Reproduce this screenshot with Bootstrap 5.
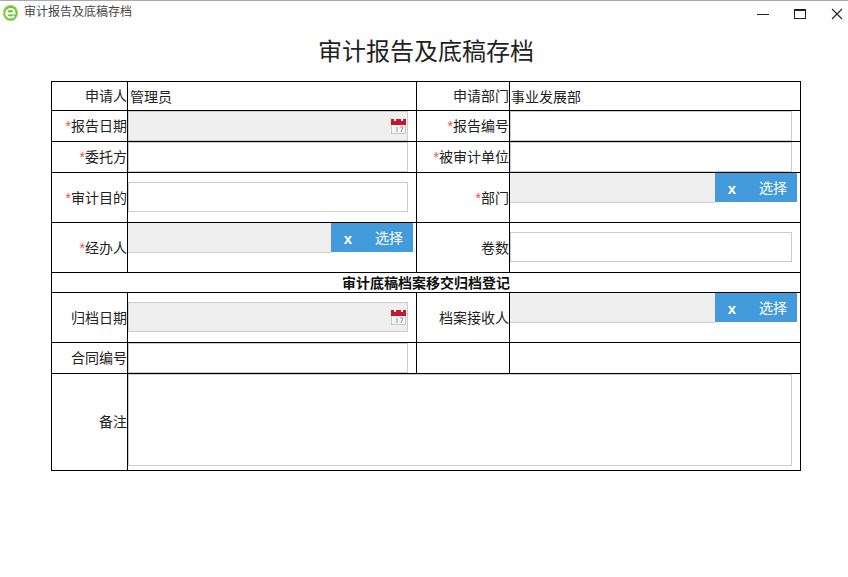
<!DOCTYPE html>
<html lang="zh">
<head>
<meta charset="utf-8">
<title>审计报告及底稿存档</title>
<link rel="stylesheet" href="https://cdn.jsdelivr.net/npm/bootstrap@5.3.0/dist/css/bootstrap.min.css">
<style>
html,body{height:100%;}
body{background:#fff;color:#222;font-family:"Liberation Sans","Noto Sans CJK SC",sans-serif;font-size:14px;border-top:1px solid #aaa;overflow:hidden;}
.win-bar{height:24px;padding-left:2px;padding-right:1px;}
.win-title{font-size:12px;line-height:14px;color:#444;margin-left:5px;margin-top:-3px;}
.win-ctrls{gap:17px;margin-top:2px;}
.win-ctrl{width:20px;height:24px;}
.doc-title{font-size:24px;font-weight:400;line-height:32px;margin:11px 0 0;text-align:center;width:852px;color:#222;}
.sheet-wrap{padding:13px 0 0 51px;}
.sheet{table-layout:fixed;border-collapse:collapse;width:749px;}
.sheet td{border:1px solid #000;padding:0;line-height:16px;}
.c1{width:76px}.c2{width:289px}.c3{width:93px}.c4{width:291px}
.h29{height:29px}.h31{height:31px}.h50{height:50px}.h20{height:20px}.h97{height:97px}
.lab{text-align:right;vertical-align:middle;}
.req{color:#f44;}
.val{padding-left:2px!important;vertical-align:middle;padding-top:1px!important;}
.val-r{padding-left:1px!important;}
.fld{display:block;border:1px solid #ccc;background:#fff;height:30px;padding:0;border-radius:0;outline:0;}
.fld-up{margin-bottom:1px;}
.w-l{width:280px}.w-r{width:282px}
.fld-off{background:#efefef;}
.date-box{position:relative;width:280px;}
.date-ico{position:absolute;right:1px;top:6px;}
.pick{height:30px;}
.pick-l{width:285px}.pick-r{width:287px}
.pick-in{flex:1 1 auto;border:0;border-bottom:1px solid #ccc;background:#efefef;height:30px;}
.pick-x{width:34px;text-align:center;font-size:15px;font-weight:700;line-height:31px;}
.pick-btn{width:82px;height:29px;background:#439bdb;color:#fff;line-height:30px;font-size:14px;}
.pick-txt{margin-left:10px;}
.sec{font-weight:700;text-align:center;line-height:18px!important;color:#111;}
.top-cell{vertical-align:top;}
.memo{width:664px;height:92px;resize:none;margin-bottom:4px;}
</style>
</head>
<body>
<div class="win-bar d-flex align-items-center">
  <svg width="17" height="18" viewBox="0 0 17 18" aria-hidden="true"><ellipse cx="8.500" cy="9" rx="7.500" ry="8" fill="#6cc02c"/><ellipse cx="8.500" cy="9" rx="7" ry="7.500" fill="none" stroke="#b4e084"/><path d="M4.500 9.300h8c0-3-1.700-4.300-4-4.300-2.500 0-4.200 1.800-4.200 4.200s1.700 4.300 4.200 4.300c1.700 0 3-.6 3.700-1.800" fill="none" stroke="#fff" stroke-width="2.200"/></svg>
  <span class="win-title">审计报告及底稿存档</span>
  <div class="ms-auto d-flex win-ctrls">
    <div class="win-ctrl d-flex align-items-center justify-content-center"><svg width="12" height="12" viewBox="0 0 12 12"><path d="M0 6.500h12" stroke="#222"/></svg></div>
    <div class="win-ctrl d-flex align-items-center justify-content-center"><svg width="13" height="12" viewBox="0 0 13 12"><rect x=".5" y="1.500" width="11" height="9" fill="none" stroke="#222"/><path d="M0 2h12" stroke="#222" stroke-width="2"/></svg></div>
    <div class="win-ctrl d-flex align-items-center justify-content-center"><svg width="12" height="12" viewBox="0 0 12 12"><path d="M1 1l10 10M11 1L1 11" stroke="#222" stroke-width="1.100"/></svg></div>
  </div>
</div>
<h1 class="doc-title">审计报告及底稿存档</h1>
<div class="sheet-wrap">
<table class="sheet">
<colgroup><col class="c1"><col class="c2"><col class="c3"><col class="c4"></colgroup>
<tr class="h29"><td class="lab">申请人</td><td class="val">管理员</td><td class="lab">申请部门</td><td class="val val-r">事业发展部</td></tr>
<tr class="h31"><td class="lab"><span class="req">*</span>报告日期</td><td><div class="date-box"><input class="fld fld-off w-l" disabled><svg class="date-ico" width="16" height="17" viewBox="0 0 16 17"><rect x=".5" y="2.500" width="14" height="14" fill="#f4f4f4" stroke="#c8c8c8"/><rect y="2" width="15" height="6" fill="#c9142c"/><rect x="3" y="1" width="2" height="3" fill="#fff"/><rect x="10" y="1" width="2" height="3" fill="#fff"/><path d="M6 10v5M9 10h3l-2 5" stroke="#999" fill="none"/></svg></div></td><td class="lab"><span class="req">*</span>报告编号</td><td><input class="fld w-r"></td></tr>
<tr class="h31"><td class="lab"><span class="req">*</span>委托方</td><td><input class="fld w-l"></td><td class="lab"><span class="req">*</span>被审计单位</td><td><input class="fld w-r"></td></tr>
<tr class="h50"><td class="lab"><span class="req">*</span>审计目的</td><td><input class="fld fld-up w-l"></td><td class="lab"><span class="req">*</span>部门</td><td class="top-cell"><div class="pick pick-r d-flex"><input class="pick-in" disabled><div class="pick-btn d-flex flex-shrink-0"><span class="pick-x">x</span><span class="pick-txt">选择</span></div></div></td></tr>
<tr class="h50"><td class="lab"><span class="req">*</span>经办人</td><td class="top-cell"><div class="pick pick-l d-flex"><input class="pick-in" disabled><div class="pick-btn d-flex flex-shrink-0"><span class="pick-x">x</span><span class="pick-txt">选择</span></div></div></td><td class="lab">卷数</td><td><input class="fld fld-up w-r"></td></tr>
<tr class="h20"><td colspan="4" class="sec">审计底稿档案移交归档登记</td></tr>
<tr class="h50"><td class="lab">归档日期</td><td><div class="date-box fld-up"><input class="fld fld-off w-l" disabled><svg class="date-ico" width="16" height="17" viewBox="0 0 16 17"><rect x=".5" y="2.500" width="14" height="14" fill="#f4f4f4" stroke="#c8c8c8"/><rect y="2" width="15" height="6" fill="#c9142c"/><rect x="3" y="1" width="2" height="3" fill="#fff"/><rect x="10" y="1" width="2" height="3" fill="#fff"/><path d="M6 10v5M9 10h3l-2 5" stroke="#999" fill="none"/></svg></div></td><td class="lab">档案接收人</td><td class="top-cell"><div class="pick pick-r d-flex"><input class="pick-in" disabled><div class="pick-btn d-flex flex-shrink-0"><span class="pick-x">x</span><span class="pick-txt">选择</span></div></div></td></tr>
<tr class="h31"><td class="lab">合同编号</td><td><input class="fld w-l"></td><td></td><td></td></tr>
<tr class="h97"><td class="lab">备注</td><td colspan="3"><textarea class="fld memo"></textarea></td></tr>
</table>
</div>
<script src="https://cdn.jsdelivr.net/npm/bootstrap@5.3.0/dist/js/bootstrap.bundle.min.js"></script>
</body>
</html>
